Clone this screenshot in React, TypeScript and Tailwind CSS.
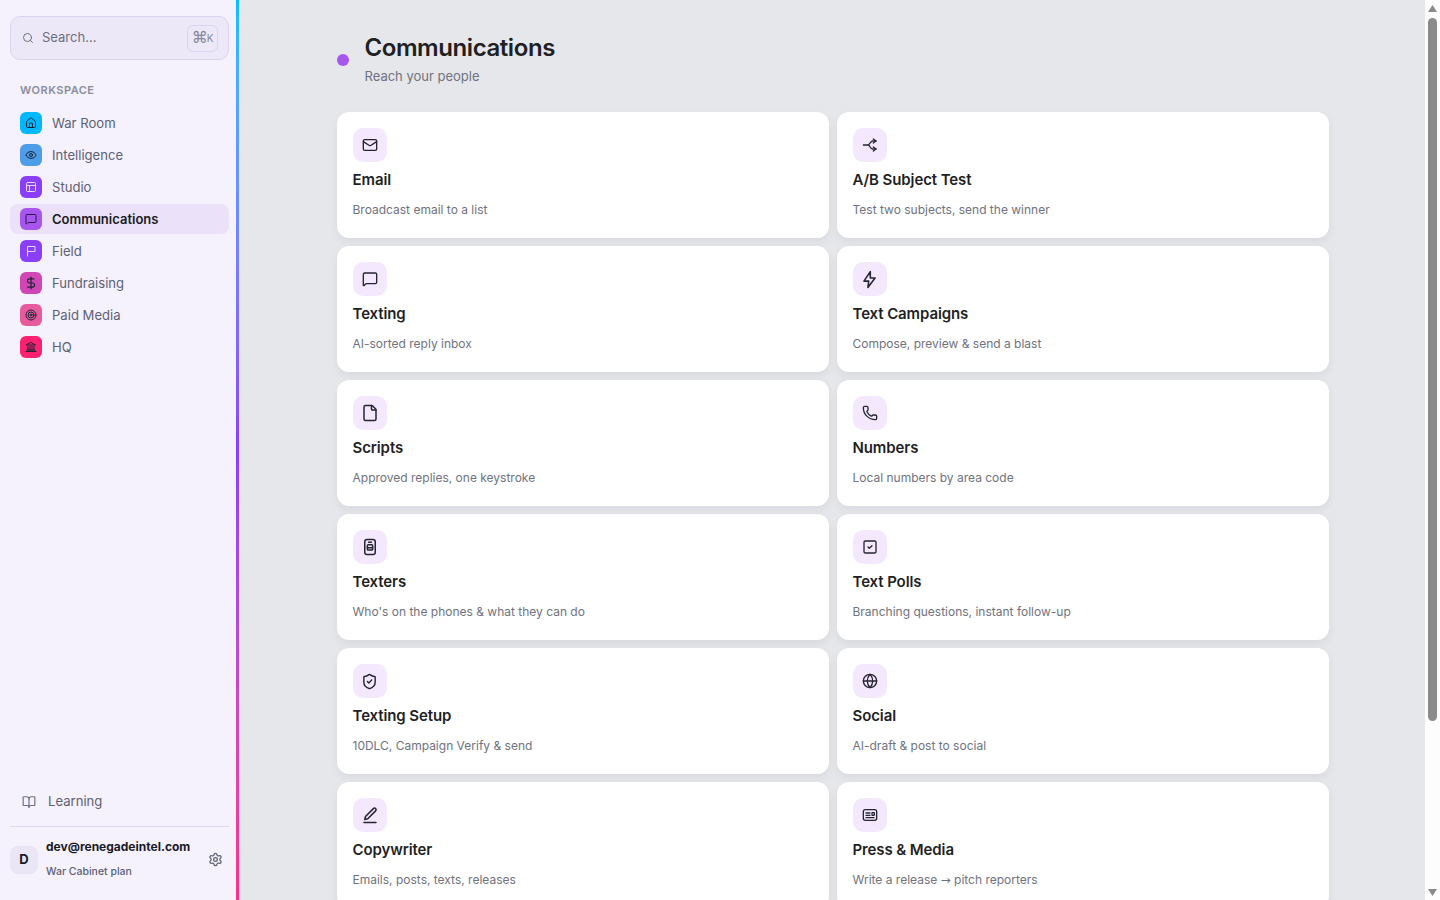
import {
  Search,
  House,
  Eye,
  PanelsTopLeft,
  MessageSquare,
  DollarSign,
  Target,
  BookOpen,
  Settings,
  Mail,
  File,
  Phone,
  SquareCheck,
  ShieldCheck,
  Globe,
} from "lucide-react";

const Glyph = ({ size, className, children }: any) => (
  <svg width={size} height={size} viewBox="0 0 24 24" fill="none" stroke="currentColor" strokeWidth={2} strokeLinecap="round" strokeLinejoin="round" className={className}>
    {children}
  </svg>
);

const FieldFlag = (p: any) => (
  <Glyph {...p}>
    <path d="M5 22V3h15v10H5" />
  </Glyph>
);

const Bank = (p: any) => (
  <Glyph {...p}>
    <path d="M2 21h20M4 18h16M6 18v-7M10 18v-7M14 18v-7M18 18v-7M12 3l9 5H3z" />
  </Glyph>
);

const Fork = (p: any) => (
  <Glyph {...p}>
    <path d="M2 12h7c3 0 3-6 7-6h5M9 12c3 0 3 6 7 6h5" />
    <path d="M17 3l4 3-4 3M17 15l4 3-4 3" />
  </Glyph>
);

const Bolt = (p: any) => (
  <Glyph {...p}>
    <path d="M13 2 5 14h6l-1 8 9-12h-6z" />
  </Glyph>
);

const TexterPhone = (p: any) => (
  <Glyph {...p}>
    <rect x="5" y="2" width="14" height="20" rx="3" />
    <path d="M10 5.5h4" />
    <rect x="8.5" y="9" width="7" height="7" rx="1" />
    <path d="M8.5 13h7" />
  </Glyph>
);

const Pen = (p: any) => (
  <Glyph {...p}>
    <path d="M4 22h16" />
    <path d="M16.5 3.5a2.1 2.1 0 0 1 3 3L9 17l-4 1 1-4z" />
  </Glyph>
);

const PressCard = (p: any) => (
  <Glyph {...p}>
    <rect x="2" y="4" width="20" height="16" rx="3" />
    <path d="M6 9h6M6 12.5h6M6 16h12" />
    <rect x="15" y="8.5" width="3.5" height="4" rx="0.5" />
  </Glyph>
);

const navItems = [
  { label: "War Room", Icon: House, box: "bg-[#00b8ff]", icon: "text-[#1b2436]" },
  { label: "Intelligence", Icon: Eye, box: "bg-[#4d9de8]", icon: "text-[#1b2436]" },
  { label: "Studio", Icon: PanelsTopLeft, box: "bg-[#8a3ffc]", icon: "text-[#e6d9ff]" },
  { label: "Communications", Icon: MessageSquare, box: "bg-[#a855f0]", icon: "text-[#2a1a48]", active: true },
  { label: "Field", Icon: FieldFlag, box: "bg-[#8a3ffc]", icon: "text-[#e6d9ff]" },
  { label: "Fundraising", Icon: DollarSign, box: "bg-[#d046b4]", icon: "text-[#1b2436]", size: 14 },
  { label: "Paid Media", Icon: Target, box: "bg-[#e85a9e]", icon: "text-[#1b2436]" },
  { label: "HQ", Icon: Bank, box: "bg-[#ff2070]", icon: "text-[#1b2436]" },
];

const cards: { title: string; desc: React.ReactNode; Icon: any; size?: number }[] = [
  { title: "Email", desc: "Broadcast email to a list", Icon: Mail },
  { title: "A/B Subject Test", desc: "Test two subjects, send the winner", Icon: Fork },
  { title: "Texting", desc: "AI-sorted reply inbox", Icon: MessageSquare },
  { title: "Text Campaigns", desc: "Compose, preview & send a blast", Icon: Bolt, size: 19 },
  { title: "Scripts", desc: "Approved replies, one keystroke", Icon: File, size: 18 },
  { title: "Numbers", desc: "Local numbers by area code", Icon: Phone },
  { title: "Texters", desc: "Who's on the phones & what they can do", Icon: TexterPhone, size: 18 },
  { title: "Text Polls", desc: "Branching questions, instant follow-up", Icon: SquareCheck },
  { title: "Texting Setup", desc: "10DLC, Campaign Verify & send", Icon: ShieldCheck, size: 17 },
  { title: "Social", desc: "AI-draft & post to social", Icon: Globe },
  { title: "Copywriter", desc: "Emails, posts, texts, releases", Icon: Pen, size: 18 },
  {
    title: "Press & Media",
    desc: (
      <>
        Write a release <span className="[font-family:'DejaVu_Sans',sans-serif]">→</span> pitch reporters
      </>
    ),
    Icon: PressCard,
  },
];

const Sidebar = () => (
  <aside className="w-[240px] h-screen shrink-0 flex pr-px bg-[#e5e7eb]">
    <div className="flex-1 flex flex-col bg-[#f5f1fd] pl-[10px] pr-[7px] pt-4 pb-[21px]">
      <div className="h-11 flex items-center rounded-[10px] border border-[#dcd2f2] bg-[#ede8f8] pl-[11px] pr-[10px]">
        <Search size={12} className="text-[#6b7080]" />
        <span className="ml-[8px] text-[13px] text-[#6b6f80]">Search...</span>
        <span className="ml-auto w-[31px] h-[27px] flex items-center justify-center rounded-md border border-[#dcd2f2] text-[#85879a]">
          <span className="text-[16px] leading-none [font-family:'DejaVu_Sans',sans-serif]">⌘</span>
          <span className="-ml-px text-[10px] leading-none">K</span>
        </span>
      </div>

      <div className="mt-[22px] pl-[10px] text-[11px] font-semibold tracking-[0.5px] leading-4 text-[#8b8d9c]">WORKSPACE</div>

      <nav className="mt-[10px] flex flex-col gap-[2px]">
        {navItems.map(({ label, Icon, box, icon, active, size }) => (
          <div
            key={label}
            className={`h-[30px] flex items-center gap-[10px] rounded-lg px-[10px] ${
              active ? "bg-[#ebe1f8] text-[13px] font-semibold text-[#1a1a24]" : "text-[13.1px] text-[#5d6175]"
            }`}
          >
            <span className={`w-[22px] h-[22px] rounded-md flex items-center justify-center ${box}`}>
              <Icon size={size ?? 12} className={icon} />
            </span>
            <span className="pt-[2px]">{label}</span>
          </div>
        ))}
      </nav>

      <div className="mt-auto h-[30px] flex items-center gap-[12px] pl-[12px] text-[13.1px] text-[#5d6175]">
        <BookOpen size={14} className="text-[#6b7080]" />
        Learning
      </div>

      <div className="mt-[9px] border-t border-[#dfd8f0] pt-[11px] flex items-start">
        <div className="mt-[8px] w-7 h-7 rounded-lg bg-[#eae6f6] flex items-center justify-center text-[13px] font-bold text-[#1a1a24]">D</div>
        <div className="ml-2 flex-1">
          <div className="text-[12px] leading-[18px] font-bold text-[#1a1a24]">dev@renegadeintel.com</div>
          <div className="mt-[9px] text-[10.5px] leading-[14px] font-medium text-[#5d6175]">War Cabinet plan</div>
        </div>
        <Settings size={15} className="mt-[14px] mr-[6px] text-[#5d6175]" />
      </div>
    </div>
    <div className="w-[3px] bg-gradient-to-b from-[#00bfff] via-[#8b3dff] to-[#ff2d87]" />
  </aside>
);

const Card = ({ title, desc, Icon, size }: { title: string; desc: React.ReactNode; Icon: any; size?: number }) => (
  <div className="h-[126px] rounded-xl bg-white p-4 shadow-[0_4px_10px_rgba(20,20,40,0.06)]">
    <div className="w-[34px] h-[34px] rounded-[10px] bg-[#f3e8fd] flex items-center justify-center">
      <Icon size={size ?? 16} className="text-[#262633]" />
    </div>
    <div className="mt-[6px] text-[15px] leading-6 font-semibold tracking-[-0.1px] text-[#1f1f24]">{title}</div>
    <div className="mt-[8px] text-[12px] leading-5 text-[#70727e]">{desc}</div>
  </div>
);

// the browser runs with hidden scrollbars, so the track is drawn as its own column
const ScrollTrack = () => (
  <div className="w-[15px] h-screen shrink-0 bg-[#fdfdfd] flex flex-col items-center">
    <svg width="9" height="7" viewBox="0 0 9 7" className="mt-[5px] fill-[#8a8a8a]">
      <path d="M4.5 0L9 7H0z" />
    </svg>
    <div className="mt-[6px] w-[9px] h-[703px] rounded-full bg-[#8a8a8a]" />
    <svg width="9" height="7" viewBox="0 0 9 7" className="mt-auto mb-[4px] fill-[#8a8a8a]">
      <path d="M0 0h9L4.5 7z" />
    </svg>
  </div>
);

export default function App() {
  return (
    <div className="h-screen flex overflow-hidden bg-[#e5e7eb] [font-family:Inter,'Noto_Sans',sans-serif]">
      <Sidebar />
      <main className="flex-1 h-screen overflow-y-auto">
        <div className="w-[992px] mx-auto pt-8 pb-[198px]">
          <div className="flex items-center gap-4">
            <span className="w-3 h-3 rounded-full bg-[#a855f0] mt-[2px]" />
            <div>
              <h1 className="text-[24px] leading-8 font-semibold tracking-[-0.43px] text-[#1f1f24]">Communications</h1>
              <p className="mt-[2px] text-[13px] leading-5 text-[#70727e]">Reach your people</p>
            </div>
          </div>
          <div className="mt-[26px] grid grid-cols-2 gap-2">
            {cards.map((c) => (
              <Card key={c.title} {...c} />
            ))}
          </div>
        </div>
      </main>
      <ScrollTrack />
    </div>
  );
}
